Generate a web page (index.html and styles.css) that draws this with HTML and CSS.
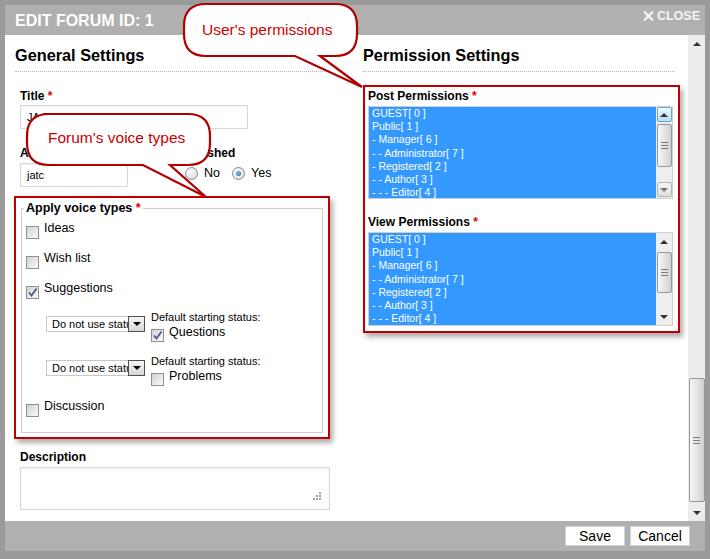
FILE: index.html
```html
<!DOCTYPE html>
<html>
<head>
<meta charset="utf-8">
<title>Edit Forum</title>
<link rel="stylesheet" href="styles.css">
</head>
<body>
<div class="frame">
  <div class="dialog">
    <div class="titlebar">
      <div class="title">EDIT FORUM ID: 1</div>
      <div class="close">
        <svg width="11" height="10" viewBox="0 0 11 10"><path d="M1 0.5 L10 9.5 M10 0.5 L1 9.5" stroke="#f5f5f5" stroke-width="2.2" fill="none"/></svg>
        <span>CLOSE</span>
      </div>
    </div>
    <div class="body">
      <div class="content">
        <div class="col left">
          <h2 class="section">General Settings</h2>
          <div class="title-field">
            <label class="lbl">Title <span class="req">*</span></label>
            <div class="input title-input">JA Forum</div>
          </div>
          <div class="row2">
            <div class="author">
              <label class="lbl">Author</label>
              <div class="input author-input">jatc</div>
            </div>
            <div class="published">
              <label class="lbl">Published</label>
              <div class="radios">
                <span class="radio"></span><span class="rl no">No</span>
                <span class="radio on"></span><span class="rl">Yes</span>
              </div>
            </div>
          </div>
          <div class="hl voice">
            <fieldset class="vset">
              <legend>Apply voice types <span class="req">*</span></legend>
              <div class="cbrow first"><span class="cb"></span><span>Ideas</span></div>
              <div class="cbrow"><span class="cb"></span><span>Wish list</span></div>
              <div class="cbrow"><span class="cb on"><svg width="11" height="11" viewBox="0 0 11 11"><path d="M2 5.5 L4.5 8.5 L9.5 1.5" stroke="#4b5a8c" stroke-width="1.8" fill="none"/></svg></span><span>Suggestions</span></div>
              <div class="subrow">
                <div class="select"><span class="val">Do not use statu</span><span class="dd"></span></div>
                <div class="status">
                  <div class="st-label">Default starting status:</div>
                  <div class="st-row"><span class="cb on"><svg width="11" height="11" viewBox="0 0 11 11"><path d="M2 5.5 L4.5 8.5 L9.5 1.5" stroke="#4b5a8c" stroke-width="1.8" fill="none"/></svg></span><span>Questions</span></div>
                </div>
              </div>
              <div class="subrow">
                <div class="select"><span class="val">Do not use statu</span><span class="dd"></span></div>
                <div class="status">
                  <div class="st-label">Default starting status:</div>
                  <div class="st-row"><span class="cb"></span><span>Problems</span></div>
                </div>
              </div>
              <div class="cbrow last"><span class="cb"></span><span>Discussion</span></div>
            </fieldset>
          </div>
          <label class="lbl desc-lbl">Description</label>
          <div class="textarea">
            <svg class="grip" width="10" height="10" viewBox="0 0 10 10" fill="#a0a0a0"><rect x="7" y="1" width="2" height="2"/><rect x="4" y="4" width="2" height="2"/><rect x="7" y="4" width="2" height="2"/><rect x="1" y="7" width="2" height="2"/><rect x="4" y="7" width="2" height="2"/><rect x="7" y="7" width="2" height="2"/></svg>
          </div>
        </div>
        <div class="col right">
          <h2 class="section wide">Permission Settings</h2>
          <div class="hl perms">
            <label class="lbl">Post Permissions <span class="req">*</span></label>
            <div class="listbox post">
              <ul class="items">
                <li>GUEST[ 0 ]</li>
                <li>Public[ 1 ]</li>
                <li>- Manager[ 6 ]</li>
                <li>- - Administrator[ 7 ]</li>
                <li>- Registered[ 2 ]</li>
                <li>- - Author[ 3 ]</li>
                <li>- - - Editor[ 4 ]</li>
              </ul>
              <div class="ls">
                <span class="ls-btn hot"><span class="up dark"></span></span>
                <span class="ls-thumb t-post"><span class="grip-lines"></span></span>
                <span class="ls-fill"></span>
                <span class="ls-btn box bottom"><span class="down grey"></span></span>
              </div>
            </div>
            <label class="lbl view-lbl">View Permissions <span class="req">*</span></label>
            <div class="listbox view">
              <ul class="items">
                <li>GUEST[ 0 ]</li>
                <li>Public[ 1 ]</li>
                <li>- Manager[ 6 ]</li>
                <li>- - Administrator[ 7 ]</li>
                <li>- Registered[ 2 ]</li>
                <li>- - Author[ 3 ]</li>
                <li>- - - Editor[ 4 ]</li>
              </ul>
              <div class="ls">
                <span class="ls-btn plain"><span class="up dark"></span></span>
                <span class="ls-thumb t-view"><span class="grip-lines"></span></span>
                <span class="ls-fill"></span>
                <span class="ls-btn plain"><span class="down dark"></span></span>
              </div>
            </div>
          </div>
        </div>
      </div>
      <div class="vscroll">
        <span class="vs-btn"><span class="up dark"></span></span>
        <span class="vs-track"><span class="vs-thumb"><span class="grip-lines"></span></span></span>
        <span class="vs-btn"><span class="down dark"></span></span>
      </div>
    </div>
    <div class="footer">
      <button class="btn">Save</button>
      <button class="btn">Cancel</button>
    </div>
  </div>

  <svg class="annot" width="710" height="559" viewBox="0 0 710 559">
    <path d="M206,4 H335 Q357,4 357,26 V34 Q357,56 335,56 H320 L362,87 L295,56 H206 Q184,56 184,34 V26 Q184,4 206,4 Z" fill="#fff" stroke="#b00000" stroke-width="2.2"/>
    <path d="M49,114 H188 Q210,114 210,136 V143 Q210,165 188,165 H170 L206,197 L143,165 H49 Q27,165 27,143 V136 Q27,114 49,114 Z" fill="#fff" stroke="#b00000" stroke-width="2.2"/>
  </svg>
  <div class="ctext ct1">User's permissions</div>
  <div class="ctext ct2">Forum's voice types</div>
</div>
</body>
</html>
```

FILE: styles.css
```css
* { box-sizing: border-box; }
html, body { margin: 0; padding: 0; }
body {
  width: 710px;
  height: 559px;
  overflow: hidden;
  background: #9a9a9a;
  font-family: "Liberation Sans", Arial, sans-serif;
  color: #000;
}
.frame {
  position: relative;
  width: 710px;
  height: 559px;
  padding: 5px 5px 8px 5px;
  background: #9a9a9a;
}
.dialog {
  display: flex;
  flex-direction: column;
  height: 546px;
  background: #fff;
}

/* title bar */
.titlebar {
  height: 30px;
  flex: none;
  background: #b0b0b0;
  display: flex;
  justify-content: space-between;
  align-items: flex-start;
  padding: 0 5px 0 10px;
}
.title {
  color: #fff;
  font-weight: bold;
  font-size: 16px;
  line-height: 18px;
  margin-top: 7px;
}
.close {
  display: flex;
  align-items: center;
  gap: 3px;
  color: #f5f5f5;
  font-weight: bold;
  font-size: 12.5px;
  line-height: 14px;
  margin-top: 4px;
}

/* body */
.body {
  display: flex;
  height: 486px;
  flex: none;
}
.content {
  flex: 1;
  display: flex;
  gap: 33px;
  padding-left: 9px;
  overflow: hidden;
}
.col.left { width: 316px; flex: none; }
.col.right { width: 317px; flex: none; }

.section {
  margin: 10px 0 0 1px;
  width: 310px;
  font-size: 16.3px;
  font-weight: bold;
  line-height: 20px;
  padding-bottom: 6px;
  border-bottom: 1px dotted #b8b8b8;
}
.section.wide { margin-left: 0; width: 312px; }

.lbl {
  display: block;
  font-size: 12px;
  font-weight: bold;
  line-height: 14px;
}
.req { color: #e00000; font-weight: bold; }

.left .lbl, .left .input, .left .textarea { margin-left: 6px; }

.title-field { margin-top: 17px; }
.input {
  border: 1px solid #d8d8d8;
  background: #fff;
  box-shadow: inset 0 1px 2px rgba(0,0,0,0.06);
  font-size: 11px;
  line-height: 22px;
  padding-left: 6px;
  color: #000;
}
.title-input { width: 228px; height: 24px; margin-top: 2px; }

.row2 { display: flex; margin-top: 17px; }
.author { width: 164px; }
.author-input { width: 108px; height: 24px; margin-top: 3px; }
.published .lbl { margin-left: 0; }
.radios {
  display: flex;
  align-items: center;
  margin-top: 6px;
  height: 14px;
  font-size: 12.5px;
  line-height: 14px;
}
.radio {
  width: 13px;
  height: 13px;
  border-radius: 50%;
  border: 1px solid #8a8a8a;
  background: radial-gradient(circle at 35% 35%, #ffffff, #d4d4d4);
  display: flex;
  align-items: center;
  justify-content: center;
  margin-left: 7px;
}
.radio.on::after {
  content: "";
  width: 5px;
  height: 5px;
  border-radius: 50%;
  background: radial-gradient(circle at 40% 35%, #8fc2ee, #1b5c9e);
}
.rl { margin-left: 6px; }
.rl.no { margin-right: 5px; }

/* highlight boxes */
.hl {
  border: 2px solid #c00000;
  box-shadow: 3px 4px 5px rgba(0,0,0,0.32);
  background: #fff;
}
.voice {
  margin-top: 9px;
  width: 316px;
  padding: 2px 5px 4px 5px;
}
.vset {
  margin: 0;
  border: 1px solid #cccccc;
  padding: 0 0 18px 4px;
  min-width: 0;
}
.vset legend {
  padding: 0 2px;
  margin-left: -2px;
  font-size: 12.5px;
  font-weight: bold;
  line-height: 16px;
}
.cbrow {
  display: flex;
  align-items: flex-start;
  height: 30px;
  font-size: 12.5px;
  line-height: 16px;
}
.cbrow.first { margin-top: 4px; }
.cbrow.last { height: 16px; }
.cb {
  flex: none;
  width: 13px;
  height: 13px;
  border: 1px solid #8f8f8f;
  background: linear-gradient(135deg, #d2d2d2, #fafafa);
  display: flex;
  align-items: center;
  justify-content: center;
  margin-top: 6px;
  margin-right: 5px;
}
.subrow {
  display: flex;
  height: 44px;
  padding-left: 20px;
}
.select {
  width: 99px;
  height: 16px;
  margin-top: 6px;
  border: 1px solid #c8c8c8;
  background: #fff;
  display: flex;
}
.select .val {
  flex: 1;
  font-size: 11px;
  line-height: 14px;
  padding-left: 5px;
  overflow: hidden;
  white-space: nowrap;
}
.select .dd {
  flex: none;
  width: 17px;
  height: 16px;
  margin: -1px -1px 0 0;
  border: 1px solid #505050;
  background: linear-gradient(#f6f6f6, #d6d6d6);
  display: flex;
  align-items: center;
  justify-content: center;
}
.select .dd::after {
  content: "";
  border-left: 4px solid transparent;
  border-right: 4px solid transparent;
  border-top: 4px solid #000;
}
.status { margin-left: 6px; }
.st-label {
  font-size: 11px;
  line-height: 13px;
  margin-top: 1px;
}
.st-row {
  display: flex;
  align-items: flex-start;
  font-size: 12.5px;
  line-height: 16px;
}
.st-row .cb { margin-top: 5px; }

.desc-lbl { margin-top: 11px; }
.textarea {
  width: 310px;
  height: 43px;
  margin-top: 3px;
  border: 1px solid #d8d8d8;
  box-shadow: inset 0 1px 3px rgba(0,0,0,0.06);
  display: flex;
  justify-content: flex-end;
  align-items: flex-end;
  padding: 0 7px 8px 0;
}

/* permissions */
.perms {
  margin-top: 13px;
  width: 317px;
  padding: 2px 5px 5px 3px;
}
.view-lbl { margin-top: 16px; }
.listbox {
  width: 305px;
  margin-top: 3px;
  border: 1px solid #cfcfcf;
  display: flex;
}
.listbox.post { height: 93px; }
.listbox.view { height: 94px; }
.items {
  flex: 1;
  margin: 0;
  padding: 0 0 0 3px;
  list-style: none;
  background: #3399ff;
  color: #fff;
  font-size: 10.5px;
  line-height: 13.2px;
  overflow: hidden;
}
.items li { white-space: nowrap; }
.ls {
  width: 16px;
  flex: none;
  background: #eeeeee;
  display: flex;
  flex-direction: column;
  align-items: center;
}
.ls-btn {
  width: 15px;
  height: 15px;
  flex: none;
  display: flex;
  align-items: center;
  justify-content: center;
}
.ls-btn.hot {
  border: 1px solid #78a0cf;
  border-radius: 2px;
  background: linear-gradient(#eef8fe, #b7dcf5);
}
.ls-btn.box {
  border: 1px solid #b4b4b4;
  border-radius: 2px;
  background: linear-gradient(#f6f6f6, #dedede);
}
.ls-btn.bottom { margin-bottom: 1px; }
.ls-btn.plain { height: 17px; }
.ls-thumb, .vs-thumb {
  flex: none;
  width: 15px;
  border: 1px solid #979797;
  border-radius: 2px;
  background: linear-gradient(90deg, #f6f6f6, #e2e2e2 55%, #d0d0d0);
  display: flex;
  align-items: center;
  justify-content: center;
}
.t-post { margin-top: 2px; height: 43px; }
.t-view { margin-top: 2px; height: 41px; }
.ls-fill { flex: 1; }
.grip-lines {
  width: 7px;
  height: 7px;
  border-top: 1px solid #7a7a7a;
  border-bottom: 1px solid #7a7a7a;
  background: linear-gradient(#7a7a7a, #7a7a7a) center / 7px 1px no-repeat;
}

.up, .down {
  width: 0;
  height: 0;
  border-left: 4px solid transparent;
  border-right: 4px solid transparent;
}
.up.dark { border-bottom: 4px solid #333; }
.down.dark { border-top: 4px solid #333; }
.down.grey { border-top: 4px solid #777; }

/* page scrollbar */
.vscroll {
  width: 17px;
  flex: none;
  background: #ececec;
  display: flex;
  flex-direction: column;
  align-items: center;
}
.vs-btn {
  height: 17px;
  width: 17px;
  flex: none;
  display: flex;
  align-items: center;
  justify-content: center;
}
.vs-track {
  flex: 1;
  display: flex;
  flex-direction: column;
  align-items: center;
}
.vs-thumb {
  width: 16px;
  height: 124px;
  margin-top: 326px;
}

/* footer */
.footer {
  height: 30px;
  flex: none;
  background: #b0b0b0;
  display: flex;
  justify-content: flex-end;
  align-items: center;
  gap: 5px;
  padding-right: 15px;
}
.btn {
  width: 60px;
  height: 20px;
  padding: 0;
  background: #fff;
  border: 1px solid #d2d2d2;
  font-family: "Liberation Sans", Arial, sans-serif;
  font-size: 14px;
  line-height: 18px;
  color: #000;
}

/* annotations */
.annot {
  position: absolute;
  left: 0;
  top: 0;
  pointer-events: none;
}
.ctext {
  position: absolute;
  font-size: 15.5px;
  line-height: 18px;
  color: #cc0000;
  white-space: nowrap;
}
.ct1 { left: 202px; top: 21px; }
.ct2 { left: 48px; top: 129px; }
```
